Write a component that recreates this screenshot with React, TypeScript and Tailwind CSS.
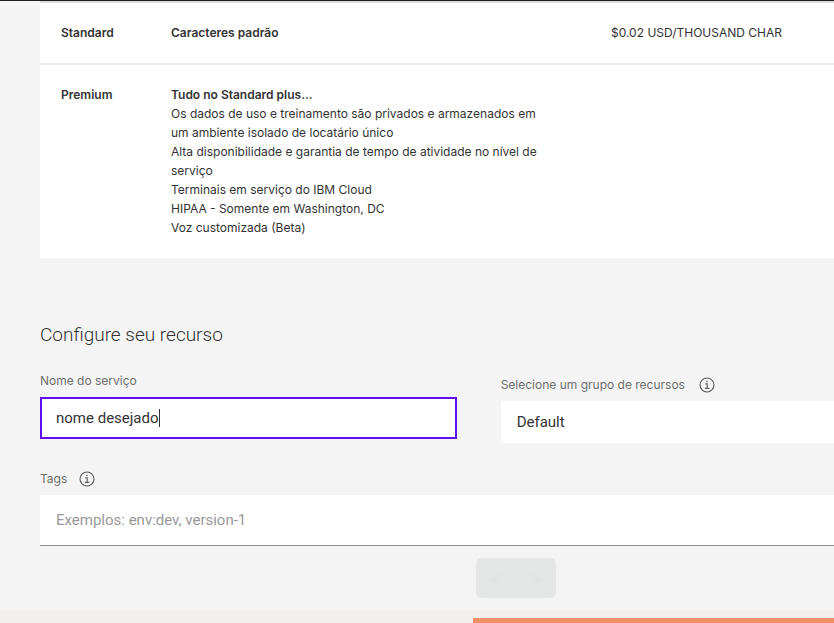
import React, { useState } from "react";

const premiumFeatures = [
  "Os dados de uso e treinamento são privados e armazenados em um ambiente isolado de locatário único",
  "Alta disponibilidade e garantia de tempo de atividade no nível de serviço",
  "Terminais em serviço do IBM Cloud",
  "HIPAA - Somente em Washington, DC",
  "Voz customizada (Beta)",
];

function InfoIcon() {
  return (
    <svg viewBox="0 0 16 16" className="size-4 shrink-0 text-[#5a5a5a]" fill="none" stroke="currentColor" aria-hidden="true">
      <circle cx="8" cy="8" r="7" strokeWidth="1.1" />
      <path d="M6.3 6.9h1.9v4.4M5.9 11.4h4.4" strokeWidth="1.1" />
      <circle cx="8" cy="4.5" r="0.8" fill="currentColor" stroke="none" />
    </svg>
  );
}

function TurnArrow({ flip }: { flip?: boolean }) {
  return (
    <svg viewBox="0 0 12 12" className={flip ? "size-3 -scale-x-100" : "size-3"} fill="none" stroke="currentColor" strokeWidth="1.5" aria-hidden="true">
      <path d="M11 2H5v8M1.5 6.5 5 10l3.5-3.5" />
    </svg>
  );
}

const labelClass = "text-[12px] leading-4 text-[#6f6f6f]";

export default function App() {
  const [name, setName] = useState("nome desejado");

  return (
    <div className="flex min-h-screen flex-col overflow-hidden bg-[#f4f4f4] font-['Inter',sans-serif] text-[#333]">
      <div className="h-px bg-[#231f20]" />
      <main className="pl-10">
        <table className="w-full table-fixed border-t-2 border-[#dcdcdc] bg-white text-left text-[12px] leading-[19px]">
          <colgroup>
            <col className="w-[131px]" />
            <col />
            <col className="w-[223px]" />
          </colgroup>
          <tbody className="align-top">
            <tr className="border-b-2 border-[#ececec]">
              <th scope="row" className="pt-5 pb-[21px] pl-[21px] font-semibold">Standard</th>
              <td className="pt-5 pb-[21px] font-semibold">Caracteres padrão</td>
              <td className="pt-5 pb-[21px]">$0.02 USD/THOUSAND CHAR</td>
            </tr>
            <tr>
              <th scope="row" className="pt-5 pb-[21px] pl-[21px] font-semibold">Premium</th>
              <td className="pt-5 pr-16 pb-[21px]">
                <p className="font-semibold">Tudo no Standard plus...</p>
                <ul>
                  {premiumFeatures.map((feature) => (
                    <li key={feature}>{feature}</li>
                  ))}
                </ul>
              </td>
              <td />
            </tr>
          </tbody>
        </table>

        <h2 className="mt-[63px] font-['Roboto',sans-serif] text-[19px] leading-7 font-light">Configure seu recurso</h2>

        <div className="mt-6 grid grid-cols-[5fr_4fr] gap-11">
          <div className="flex flex-col gap-2">
            <label htmlFor="service-name" className={labelClass}>Nome do serviço</label>
            <div className="relative">
              <input
                id="service-name"
                value={name}
                onChange={(e) => setName(e.target.value)}
                className="block h-[42px] w-full border-2 border-[#5c0df5] bg-white px-[14px] font-['Roboto',sans-serif] text-[15px] outline-none"
              />
              <span className="absolute top-3 left-[119px] h-[18px] w-px bg-[#333]" />
            </div>
          </div>
          <div className="flex flex-col gap-2 pt-1">
            <div className="flex items-center gap-[14px]">
              <label htmlFor="resource-group" className={labelClass}>Selecione um grupo de recursos</label>
              <InfoIcon />
            </div>
            <select id="resource-group" className="h-[42px] w-full appearance-none bg-white px-4 font-['Roboto',sans-serif] text-[15px]">
              <option>Default</option>
            </select>
          </div>
        </div>

        <div className="mt-7 flex flex-col gap-2">
          <div className="flex items-center gap-3">
            <label htmlFor="tags" className={labelClass}>Tags</label>
            <InfoIcon />
          </div>
          <input
            id="tags"
            placeholder="Exemplos: env:dev, version-1"
            className="h-[51px] w-full border-b border-[#8d8d8d] bg-white px-4 font-['Roboto',sans-serif] text-[15px] outline-none placeholder:text-[#999]"
          />
        </div>
      </main>

      <div className="mt-3 ml-[476px] flex h-10 w-20 items-center justify-around rounded-md bg-[#e4e6e5] text-[#e0e2e1]">
        <button type="button" disabled aria-label="Desfazer"><TurnArrow /></button>
        <button type="button" disabled aria-label="Refazer"><TurnArrow flip /></button>
      </div>
      <footer className="mt-[13px] bg-[#f2f0ee] pt-[7px]">
        <div className="ml-[473px] h-[5px] bg-[#f09068]" />
      </footer>
    </div>
  );
}
